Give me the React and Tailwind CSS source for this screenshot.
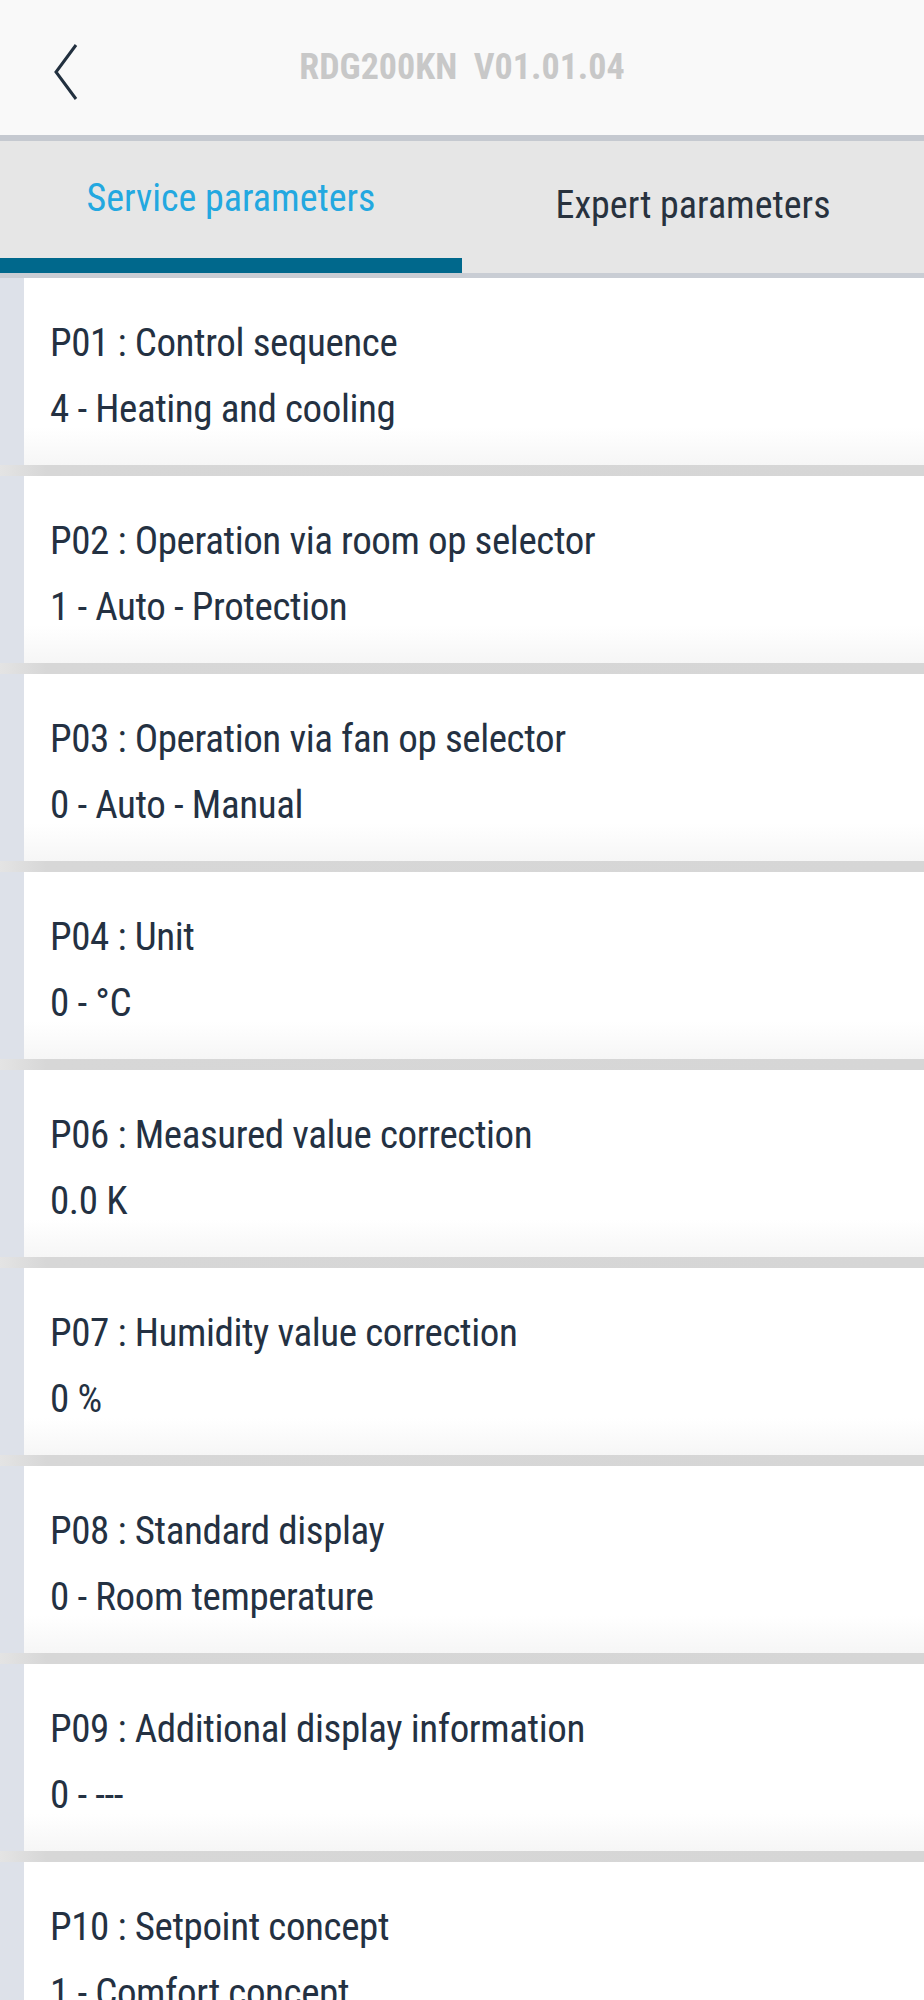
import React from 'react';

const params = [
  { code: 'P01', name: 'Control sequence', value: '4 - Heating and cooling' },
  { code: 'P02', name: 'Operation via room op selector', value: '1 - Auto - Protection' },
  { code: 'P03', name: 'Operation via fan op selector', value: '0 - Auto - Manual' },
  { code: 'P04', name: 'Unit', value: '0 - °C' },
  { code: 'P06', name: 'Measured value correction', value: '0.0 K' },
  { code: 'P07', name: 'Humidity value correction', value: '0 %' },
  { code: 'P08', name: 'Standard display', value: '0 - Room temperature' },
  { code: 'P09', name: 'Additional display information', value: '0 - ---' },
  { code: 'P10', name: 'Setpoint concept', value: '1 - Comfort concept' },
];

const font = { fontFamily: 'Roboto, "Liberation Sans", sans-serif' };

const BackIcon = () => (
  <svg width="26" height="58" viewBox="0 0 26 58" fill="none">
    <path d="M23 2 L3 29 L23 56" stroke="#22303f" strokeWidth="3" strokeLinejoin="miter" />
  </svg>
);

const ParamCard = ({ item }) => {
  return (
    <div className="flex flex-col">
      <div className="flex flex-row h-[187px]">
        <div className="w-[24px] bg-[#dde1e9]"></div>
        <div className="flex-1 flex flex-col pt-[32px] pl-[26px] bg-gradient-to-b from-white from-80% to-[#f6f6f6] text-[#243142] text-[39px] tracking-[-0.4px] leading-[66px] font-stretch-[76%]">
          <div>{item.code} : {item.name}</div>
          <div>{item.value}</div>
        </div>
      </div>
      <div className="h-[11px] bg-gradient-to-r from-[#e4e4e4] from-0% via-[#d7d7d7] via-5% to-[#d6d6d6]"></div>
    </div>
  );
};

const App = () => {
  return (
    <div className="w-[924px] h-[2000px] overflow-hidden bg-white" style={font}>
      <div className="flex flex-row items-center h-[135px] bg-[#f9f9f9] relative">
        <div className="pl-[53px] pt-[8px]">
          <BackIcon />
        </div>
        <div className="absolute left-0 right-0 top-[40px] text-center text-[36px] font-bold text-[#c8c8c8] font-stretch-[76%] pointer-events-none">
          RDG200KN&nbsp; V01.01.04
        </div>
      </div>
      <div className="h-[6px] bg-[#c5c9d0]"></div>

      <div className="flex flex-row h-[132px] bg-[#e6e6e6] text-[38px] font-stretch-[76%]">
        <div className="flex-1 flex flex-col">
          <div className="flex-1 text-center pt-[29px] text-[#23a8e0]">Service parameters</div>
          <div className="h-[15px] bg-[#00688c]"></div>
        </div>
        <div className="flex-1 text-center pt-[36px] text-[#28323e]">Expert parameters</div>
      </div>
      <div className="h-[5px] bg-[#c9cdd4]"></div>

      <div className="flex flex-col">
        {params.map((item) => (
          <ParamCard key={item.code} item={item} />
        ))}
      </div>
    </div>
  );
};

export default App;
